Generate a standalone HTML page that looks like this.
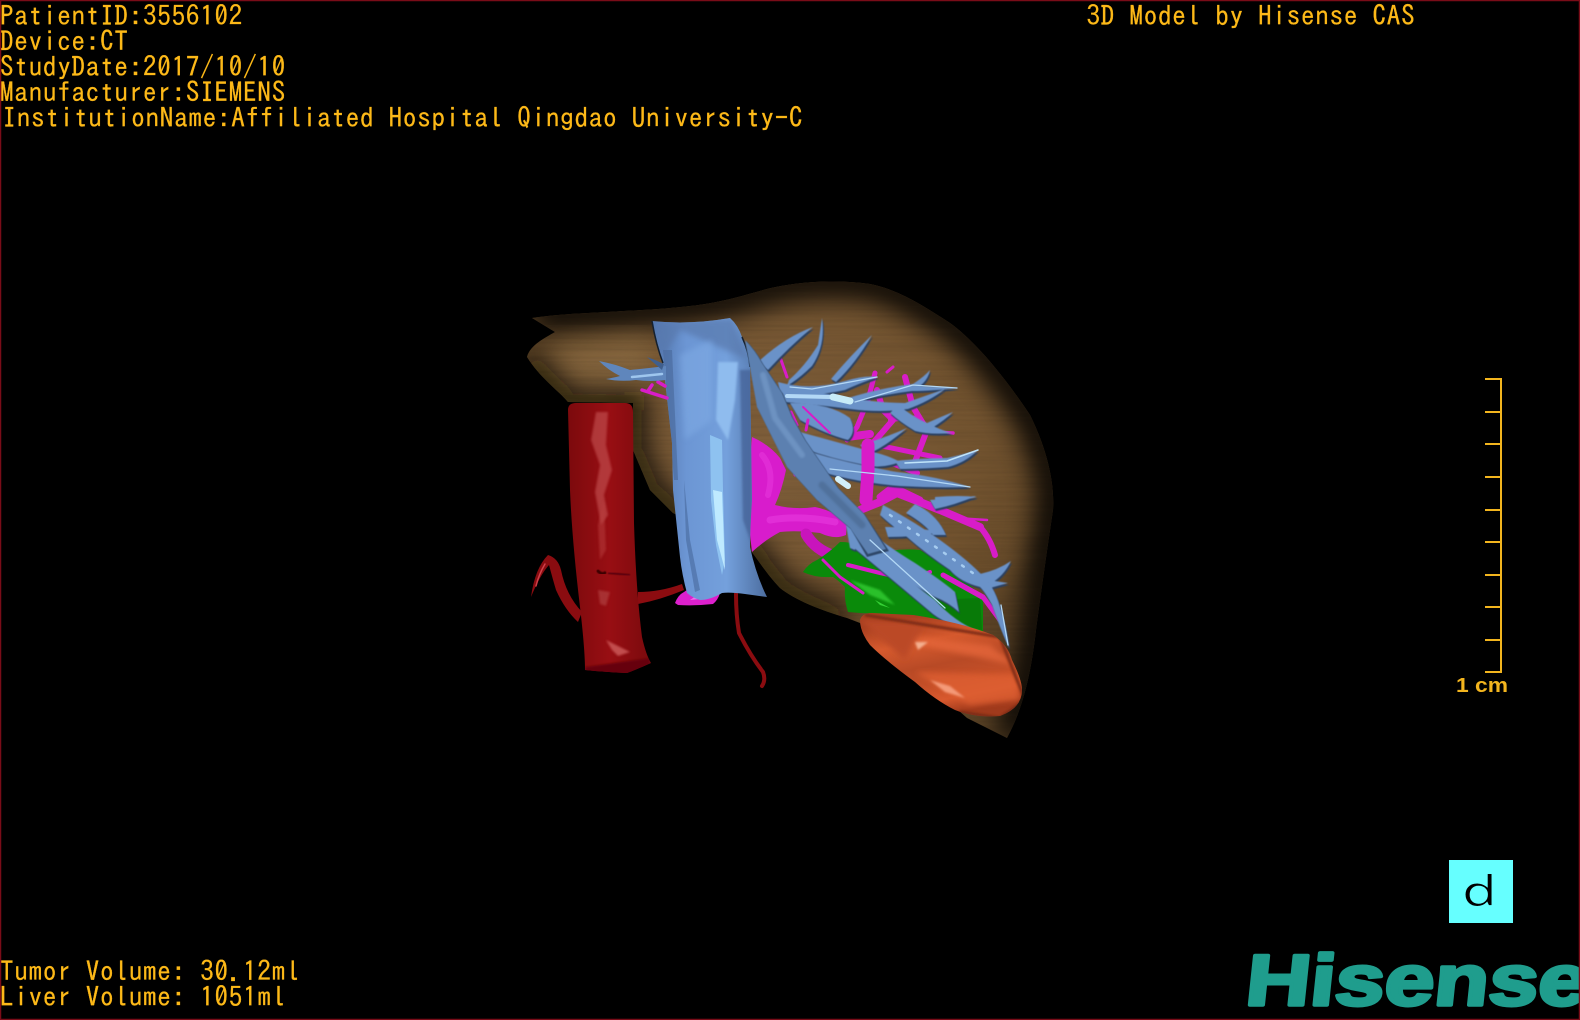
<!DOCTYPE html>
<html>
<head>
<meta charset="utf-8">
<style>
html,body{margin:0;padding:0;background:#000;width:1580px;height:1020px;overflow:hidden}
svg{display:block;position:absolute;left:0;top:0}
.t{font-family:"IPAGothic","Liberation Mono",monospace;font-size:27px;letter-spacing:.8px;fill:#fdb918;stroke:#fdb918;stroke-width:.25px;white-space:pre}
.vl{fill:none;stroke-linecap:round;stroke-linejoin:round}
</style>
</head>
<body>
<svg width="1580" height="1020" viewBox="0 0 1580 1020" xmlns="http://www.w3.org/2000/svg">
<defs>
<radialGradient id="liv" gradientUnits="userSpaceOnUse" cx="770" cy="450" r="300" gradientTransform="translate(770 450) scale(1 .82) translate(-770 -450)">
<stop offset="0" stop-color="#7f5f3b"/><stop offset=".7" stop-color="#72532f"/><stop offset=".92" stop-color="#664a29"/><stop offset="1" stop-color="#5a4225"/>
</radialGradient>
<linearGradient id="ao" x1="0" x2="1" y1="0" y2="0">
<stop offset="0" stop-color="#7c0a0d"/><stop offset=".5" stop-color="#980e13"/><stop offset="1" stop-color="#7a0a0d"/>
</linearGradient>
<linearGradient id="ivc" x1="0" x2="1" y1="0" y2="0">
<stop offset="0" stop-color="#5275ac"/><stop offset=".3" stop-color="#6c96d4"/><stop offset=".65" stop-color="#74a0dc"/><stop offset="1" stop-color="#4c6d9f"/>
</linearGradient>
<linearGradient id="or" gradientUnits="userSpaceOnUse" x1="925" y1="615" x2="945" y2="715">
<stop offset="0" stop-color="#a83f20"/><stop offset=".25" stop-color="#d65a2e"/><stop offset=".5" stop-color="#b84a26"/><stop offset=".68" stop-color="#c44f28"/><stop offset=".85" stop-color="#d8592e"/><stop offset="1" stop-color="#a03a1c"/>
</linearGradient>
<filter id="b1" x="-30%" y="-30%" width="160%" height="160%"><feGaussianBlur stdDeviation="1"/></filter>
<filter id="b3" x="-30%" y="-30%" width="160%" height="160%"><feGaussianBlur stdDeviation="3"/></filter>
<filter id="b14" x="-20%" y="-20%" width="140%" height="140%"><feGaussianBlur stdDeviation="14"/></filter>
<filter id="soft" x="-5%" y="-5%" width="110%" height="110%"><feGaussianBlur stdDeviation=".5"/></filter>
<filter id="stri" x="0" y="0" width="100%" height="100%"><feTurbulence type="fractalNoise" baseFrequency="0.006 0.35" numOctaves="2" seed="4"/><feColorMatrix values="0 0 0 0 0  0 0 0 0 0  0 0 0 0 0  1.6 0 0 0 -.55"/></filter>
<clipPath id="livc"><path d="M532 318C570 312 640 312 690 306C720 303 745 295 767 289C795 282 835 279 870 284C900 290 925 307 950 323C980 345 1010 385 1030 415C1045 445 1055 480 1053 510C1047 550 1040 600 1036 630C1032 665 1025 705 1007 738L967 718L860 623L847 618C820 610 795 600 780 588C765 572 757 558 750 550L673 513L650 490L633 450L633 403L568 402C560 392 540 378 527 357C530 345 545 338 555 332Z"/></clipPath>
<clipPath id="orc"><path d="M860 620Q862 613 872 613L913 615Q960 622 993 635Q1008 645 1012 660Q1022 680 1022 690Q1022 708 1000 716Q975 718 955 710Q935 700 915 682Q885 660 870 645Q860 632 860 620Z"/></clipPath>
<clipPath id="ivcc"><path d="M652 321Q690 325 730 318Q738 325 742 337Q750 352 750 367L752 500Q750 530 750 547Q756 575 767 597L745 594Q730 592 722 593Q710 600 700 600Q693 598 687 593Q682 575 680 557L673 490L672 443L663 363Q656 340 652 321Z"/></clipPath>
<clipPath id="aoc"><path d="M568 410Q568 403 576 403L625 403Q633 403 633 412L634 523Q636 590 642 637Q646 655 651 663Q640 668 627 673Q605 672 585 670Q585 650 580 607Q572 540 570 490Z"/></clipPath>
<g id="bl">
<path d="M758 362Q785 337 813 327Q790 346 768 370Z"/>
<path d="M822 318Q826 345 812 366Q800 378 787 386L789 380Q805 366 818 345Z"/>
<path d="M872 335Q856 363 836 382L831 379Q850 356 872 335Z"/>
<path d="M778 382Q810 391 845 381Q865 375 878 377Q860 383 845 390Q810 398 780 393Z"/>
<path d="M845 399Q880 388 913 384Q925 376 930 370Q928 380 920 386Q940 387 958 388Q930 391 912 391Q880 395 850 403Z"/>
<path d="M953 412Q945 420 932 428L925 424Q938 418 953 412Z"/>
<path d="M898 405Q915 418 925 422Q940 430 952 433Q930 435 915 431Q900 422 890 413Z"/>
<path d="M782 392Q830 392 850 398Q880 403 905 403Q925 396 945 389Q930 401 908 409Q880 413 850 409Q820 405 785 402Z"/>
<path d="M790 403Q830 403 850 418Q857 432 848 440Q825 434 800 420Z"/>
<path d="M860 445Q885 438 907 428Q885 447 868 454Z"/>
<path d="M800 432Q840 443 873 452Q890 456 900 462Q880 470 860 464Q830 458 805 449Z"/>
<path d="M807 451Q850 464 897 472Q935 476 970 487Q935 488 900 486Q850 482 810 468Z"/>
<path d="M895 461Q925 458 947 458Q965 454 978 450Q965 463 948 467Q920 469 900 469Z"/>
<path d="M935 497Q960 495 977 497Q955 502 935 504Z"/>
<path d="M858 535Q900 575 935 600Q955 622 978 631Q950 627 933 614Q895 582 853 547Z"/>
<path d="M850 518Q890 548 915 563Q945 583 955 592L959 612Q948 602 935 597Q900 578 848 537Z"/>
<path d="M883 505Q915 522 940 540Q965 558 980 573Q994 585 1000 607Q1006 625 1009 648Q1000 628 992 605Q985 592 980 587Q960 582 950 570Q925 553 907 537Q892 526 880 515Z"/>
<path d="M980 574Q998 570 1011 561Q1004 576 990 584Z"/>
<path d="M988 580L1008 583L990 588Z"/>
<path d="M885 527Q915 527 940 532Q915 537 888 537Z"/>
<path d="M915 504Q937 514 946 535L933 535Q925 524 906 513Z"/>
<path d="M930 500Q955 498 976 496Q955 505 935 509Z"/>
<path d="M846 525L857 527 855 550 850 548Z"/>
</g>
</defs>

<rect width="1580" height="1020" fill="#000"/>

<!-- liver -->
<path d="M532 318C570 312 640 312 690 306C720 303 745 295 767 289C795 282 835 279 870 284C900 290 925 307 950 323C980 345 1010 385 1030 415C1045 445 1055 480 1053 510C1047 550 1040 600 1036 630C1032 665 1025 705 1007 738L967 718L860 623L847 618C820 610 795 600 780 588C765 572 757 558 750 550L673 513L650 490L633 450L633 403L568 402C560 392 540 378 527 357C530 345 545 338 555 332Z" fill="url(#liv)"/>
<g clip-path="url(#livc)">
<path d="M532 318C570 312 640 312 690 306C720 303 745 295 767 289C795 282 835 279 870 284C900 290 925 307 950 323C980 345 1010 385 1030 415C1045 445 1055 480 1053 510C1047 550 1040 600 1036 630C1032 665 1025 705 1007 738" fill="none" stroke="#050301" stroke-width="30" filter="url(#b14)"/>
<path d="M527 357C540 378 560 392 568 402L633 403L633 450L650 490L673 513L750 550C757 558 765 572 780 588C795 600 820 610 847 618" fill="none" stroke="#0c0803" stroke-width="22" filter="url(#b14)"/>
<path d="M540 345L650 335 650 385 575 385Z" fill="#9a7a50" opacity=".45" filter="url(#b14)"/>
<rect x="520" y="275" width="540" height="470" filter="url(#stri)" opacity=".08"/>
</g>

<!-- aorta -->
<path d="M582 612Q566 595 561 570Q558 558 548 555Q535 568 531 597Q540 575 549 565Q553 580 556 590Q565 610 578 622Z" fill="#8a0c10"/>
<path class="vl" d="M545 564Q539 574 536 586" stroke="#d0404a" stroke-width="1.5"/>
<path d="M638 592Q660 592 682 584L684 590Q660 600 638 604Z" fill="#8c0c10"/>
<path class="vl" d="M736 594Q736 615 739 633Q750 655 763 672Q766 680 762 686" stroke="#8a0c10" stroke-width="4"/>
<path d="M568 410Q568 403 576 403L625 403Q633 403 633 412L634 523Q636 590 642 637Q646 655 651 663Q640 668 627 673Q605 672 585 670Q585 650 580 607Q572 540 570 490Z" fill="url(#ao)"/>
<g clip-path="url(#aoc)">
<path d="M596 412L608 412 606 445 612 470 604 495 608 515 601 525 595 492 600 465 591 440Z" fill="#c65454" opacity=".6" filter="url(#b1)"/>
<path d="M604 500L606 550 600 560 598 525Z" fill="#b83c3c" opacity=".55" filter="url(#b1)"/>
<path d="M598 590L610 592 606 606 600 604Z" fill="#b04040" opacity=".7" filter="url(#b1)"/>
<path d="M606 640L630 652 618 656 612 650Z" fill="#c85454" opacity=".9" filter="url(#b1)"/>
<path d="M597 570Q602 576 606 572" stroke="#3a0406" stroke-width="3" fill="none" filter="url(#soft)"/>
<path d="M608 573L630 575" stroke="#5c0608" stroke-width="2" fill="none" filter="url(#soft)"/>
<path d="M585 667L650 658 650 680 585 680Z" fill="#660608" filter="url(#b1)"/>
</g>

<!-- magenta portal main -->
<path d="M752 437Q770 445 780 458L786 470Q782 490 775 505Q795 510 815 507Q830 510 847 520L846 535Q835 540 820 533Q795 530 780 532Q765 540 752 552L746 500Z" fill="#d81ccc"/>
<path d="M762 455Q775 470 768 495" class="vl" stroke="#ee44e4" stroke-width="6" opacity=".4"/>
<path d="M770 520Q800 515 835 522" class="vl" stroke="#f04ce8" stroke-width="7" opacity=".4"/>
<path class="vl" d="M806 534Q815 550 835 556L863 553" stroke="#c814bc" stroke-width="11"/>
<path d="M675 603Q678 595 684 592Q695 585 703 577Q714 582 720 593Q718 600 713 604Q695 606 678 605Z" fill="#dc20cc"/>
<path d="M690 600L705 590 710 598Z" fill="#f070ee"/>

<!-- ivc -->
<path d="M652 321Q690 325 730 318Q738 325 742 337Q750 352 750 367L752 500Q750 530 750 547Q756 575 767 597L745 594Q730 592 722 593Q710 600 700 600Q693 598 687 593Q682 575 680 557L673 490L672 443L663 363Q656 340 652 321Z" fill="url(#ivc)"/>
<g clip-path="url(#ivcc)">
<path d="M655 322L732 318 748 360 730 352 680 330 662 360Z" fill="#5878ac" opacity=".7" filter="url(#b3)"/>
<path d="M718 362L738 362 735 400 728 440 716 420Z" fill="#8fbcee" filter="url(#b1)"/>
<path d="M680 355L712 340 712 420 685 440Z" fill="#7da8e2" opacity=".65" filter="url(#b3)"/>
<path d="M710 435L722 440 723 490 725 560 722 575 716 545 711 500Z" fill="#8ec2f0"/>
<path d="M713 490L722 492 725 570 717 540Z" fill="#bfeaff"/>
<path d="M684 480L690 540 700 590 695 592 686 540Z" fill="#4d6fa4" opacity=".7"/>
<path d="M740 370L752 370 752 545 743 520Z" fill="#47659a" opacity=".8" filter="url(#b1)"/>
<path d="M663 350L672 350 678 480 674 480Z" fill="#4c6ca0" opacity=".7"/>
</g>
<path d="M652 321Q656 345 663 363" fill="none" stroke="#15202e" stroke-width="1.5"/>
<path d="M742 337Q749 352 750 367" fill="none" stroke="#15202e" stroke-width="1.5"/>

<!-- left blue branch & magenta -->
<path class="vl" d="M642 390L667 398M648 391L652 385M658 382L665 386" stroke="#d81cc8" stroke-width="3.5"/>
<path d="M666 366Q650 368 630 370Q615 364 599 361Q608 370 620 376Q612 378 606 379Q620 382 636 380Q650 382 666 380Z" fill="#5f86bc"/>
<path class="vl" d="M662 374L632 377" stroke="#9ec6ee" stroke-width="2.5"/>
<path d="M662 370L647 357 655 360 664 364Z" fill="#3f5f8e"/>

<!-- green -->
<path d="M803 572Q808 564 817 560Q830 552 840 542Q860 542 880 553Q900 548 920 550Q955 570 983 597L983 632Q945 620 913 615L860 613L848 612Q844 600 845 587Q838 580 833 577Q815 578 803 572Z" fill="#0a8a0a"/>
<path d="M850 580L880 590 895 605 870 595Z" fill="#2cc02c" filter="url(#b1)"/>
<path d="M875 600L890 608 880 605Z" fill="#35d035"/>
<path d="M930 600L980 598 982 630 950 622Z" fill="#087a08"/>

<!-- magenta branches -->
<g class="vl" stroke="#d81cc8">
<path d="M877 390L883 410 893 420 873 443" stroke-width="6"/>
<path d="M905 377L913 407 927 430 913 467" stroke-width="6"/>
<path d="M927 432L953 433" stroke-width="3.5"/>
<path d="M890 420L920 417" stroke-width="4"/>
<path d="M875 373L868 400 857 427 847 440" stroke-width="5"/>
<path d="M803 407L830 433" stroke-width="3"/>
<path d="M847 437L870 434" stroke-width="8"/>
<path d="M877 445L940 458" stroke-width="5"/>
<path d="M880 458L917 473" stroke-width="6"/>
<path d="M880 497L893 487 920 500" stroke-width="7"/>
<path d="M860 510L880 502 897 493 940 510 980 527" stroke-width="8"/>
<path d="M980 527Q990 538 995 555" stroke-width="6"/>
<path d="M955 518L987 520" stroke-width="2.5"/>
<path d="M943 575L983 597 1000 620" stroke-width="5"/>
<path d="M848 565L880 573 910 580 930 572" stroke-width="4"/>
<path d="M823 560L840 577 863 593" stroke-width="3"/>
<path d="M857 540L880 553" stroke-width="5"/>
<path d="M780 357L787 377" stroke-width="3"/>
<path d="M887 372L893 367" stroke-width="3"/>
<path d="M790 445L795 475" stroke-width="3"/>
</g>

<!-- blue tapered branches -->
<use href="#bl" fill="#2a3f60" transform="translate(1 2)" filter="url(#soft)"/>
<use href="#bl" fill="#6a92c8" filter="url(#soft)"/>

<g class="vl" stroke="#d81cc8">
<path d="M868 445L868 470 866 500" stroke-width="13"/>
<path d="M791 412L797 425M808 420L806 430" stroke-width="3"/>
<path d="M946 577L982 597" stroke-width="5"/>
<path d="M803 407L830 433" stroke-width="2"/>
</g>

<!-- trunk -->
<path d="M745 340Q755 350 762 363L782 393 792 417 805 440 838 488 864 514 888 550 866 556 850 528 817 500 787 467 777 447 757 407Z" fill="#2f4668" transform="translate(1 1)" filter="url(#soft)"/>
<path d="M745 340Q755 350 762 363L782 393 792 417 805 440 838 488 864 514 886 549 868 554 850 528 817 500 787 467 777 447 757 407Z" fill="#5c80b0" filter="url(#soft)"/>

<g class="vl">
<path d="M763 375L775 418 802 455" stroke="#82a8d6" stroke-width="6" opacity=".45" filter="url(#b1)"/>
<path d="M822 485L862 525" stroke="#48678f" stroke-width="7" opacity=".6" filter="url(#b1)"/>
<path d="M790 387L812 389 877 377" stroke="#b3d8f6" stroke-width="1.3"/>
<path d="M787 396L830 397" stroke="#b3d8f6" stroke-width="4"/>
<path d="M833 397L850 401" stroke="#c8ecf8" stroke-width="7"/>
<path d="M855 402L913 385 957 388" stroke="#b3d8f6" stroke-width="1.3"/>
<path d="M830 469L897 476 970 487" stroke="#b3d8f6" stroke-width="1.3"/>
<path d="M905 463L947 461 978 450" stroke="#c0e4fa" stroke-width="1.5"/>
<path d="M838 479L848 486" stroke="#d2f0fb" stroke-width="6"/>
<path d="M890 515L980 578" stroke="#a6ccf0" stroke-width="2.5" stroke-dasharray="2 9"/>
<path d="M1001 605L1008 645" stroke="#b3d8f6" stroke-width="1.3"/>
<path d="M870 540L945 608" stroke="#b3d8f6" stroke-width="1.3"/>
</g>

<!-- orange -->
<path d="M860 620Q862 613 872 613L913 615Q960 622 993 635Q1008 645 1012 660Q1022 680 1022 690Q1022 708 1000 716Q975 718 955 710Q935 700 915 682Q885 660 870 645Q860 632 860 620Z" fill="url(#or)"/>
<g clip-path="url(#orc)">
<path d="M895 635L990 645 1015 665 920 645Z" fill="#e5663a" opacity=".8" filter="url(#b3)"/>
<path d="M915 672L1015 675 1020 700 970 705Z" fill="#de5e32" opacity=".8" filter="url(#b3)"/>
<path d="M860 620L925 622 905 660Z" fill="#bb4a26" filter="url(#b3)"/>
<path d="M915 642L928 642 918 650Z" fill="#f4b090" filter="url(#b1)"/>
<path d="M930 680L950 686 965 698 945 692Z" fill="#f49a78" filter="url(#b1)"/>
<path d="M865 615L1000 637 1025 700 1000 718 960 712" fill="none" stroke="#7c2c14" stroke-width="3" filter="url(#b1)"/>
</g>

<!-- text -->
<text class="t" x="0" y="25.5">PatientID:3556102</text>
<text class="t" x="0" y="51">Device:CT</text>
<text class="t" x="0" y="76.5">StudyDate:2017/10/10</text>
<text class="t" x="0" y="102">Manufacturer:SIEMENS</text>
<text class="t" x="2.5" y="127.5">InstitutionName:Affiliated Hospital Qingdao University-C</text>
<text class="t" x="1086.5" y="25.5">3D Model by Hisense CAS</text>
<text class="t" x="0" y="981">Tumor Volume: 30.12ml</text>
<text class="t" x="0" y="1006.5">Liver Volume: 1051ml</text>

<!-- scale -->
<path d="M1485 379H1501V672H1485M1485 412H1501M1485 444H1501M1485 477H1501M1485 510H1501M1485 542H1501M1485 575H1501M1485 607H1501M1485 640H1501" fill="none" stroke="#f3b51e" stroke-width="2"/>
<text x="1456" y="692" font-family="'Liberation Sans',sans-serif" font-weight="bold" font-size="20" fill="#f3b51e" textLength="52" lengthAdjust="spacingAndGlyphs">1 cm</text>

<!-- d box -->
<rect x="1449" y="860" width="64" height="63" fill="#66ffff"/>
<text transform="translate(1461 908) scale(1.6 1)" font-family="'IPAGothic',monospace" font-size="46" fill="#000" stroke="#66ffff" stroke-width="1">d</text>

<!-- logo -->
<text transform="translate(1244 1005) skewX(-6)" x="0" y="0" font-family="'Liberation Sans',sans-serif" font-weight="bold" font-size="72" fill="#1f9d8d" stroke="#1f9d8d" stroke-width="3.5" stroke-linejoin="round" textLength="342" lengthAdjust="spacingAndGlyphs">Hisense</text>

<!-- border -->
<rect x="0.5" y="0.5" width="1579" height="1019" fill="none" stroke="#7a0c18" stroke-width="1.5"/>
</svg>
</body>
</html>
